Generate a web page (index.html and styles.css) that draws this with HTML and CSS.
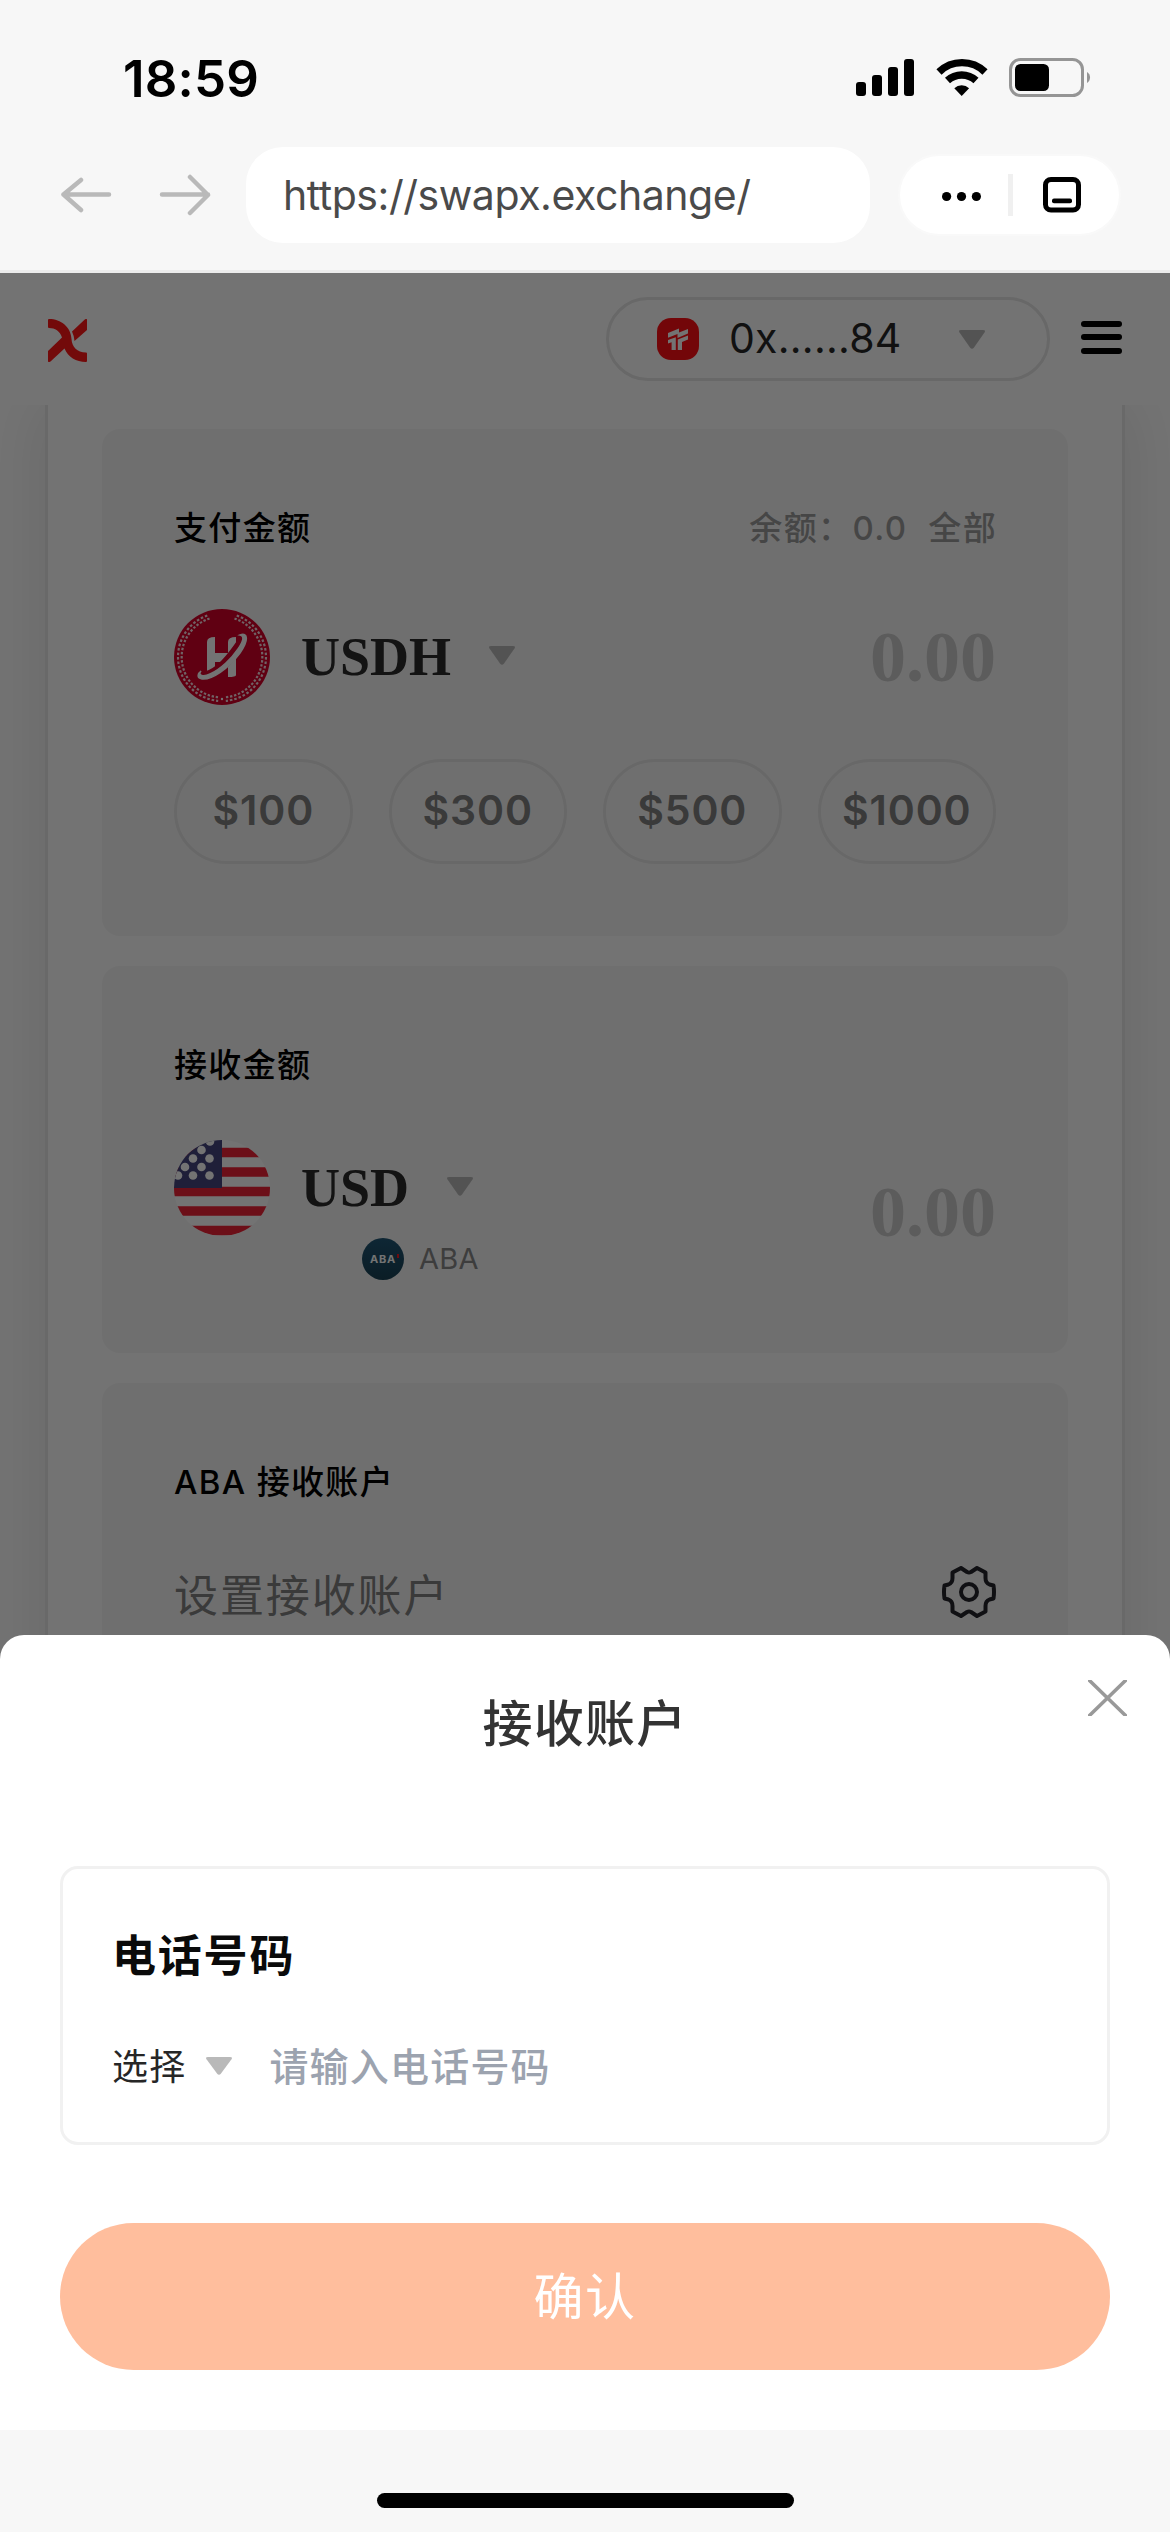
FILE: index.html
```html
<!DOCTYPE html>
<html lang="zh-CN">
<head>
<meta charset="utf-8">
<title>SwapX</title>
<link rel="stylesheet" href="styles.css">
</head>
<body>
<div class="phone">
  <div class="chrome">
    <div class="status">
      <span class="time">18:59</span>
      <svg class="status-icons" width="236" height="40" viewBox="856 58 236 40">
        <rect x="856" y="82" width="10" height="14" rx="3"/>
        <rect x="872" y="75" width="10" height="21" rx="3"/>
        <rect x="888" y="67" width="10" height="29" rx="3"/>
        <rect x="904" y="59" width="10" height="37" rx="3"/>
        <path d="M939 72 A33 33 0 0 1 985 72" fill="none" stroke="#000" stroke-width="7.4"/>
        <path d="M947.5 80.500 A21 21 0 0 1 976 80.500" fill="none" stroke="#000" stroke-width="7.400"/>
        <path d="M961.700 96 L954.300 88.200 A10.500 10.500 0 0 1 969.100 88.200 Z"/>
        <rect x="1010.500" y="59.500" width="72" height="36" rx="10" fill="none" stroke="#959595" stroke-width="3"/>
        <rect x="1015" y="64" width="34" height="27" rx="5.500"/>
        <path d="M1087 72 A6.500 6.500 0 0 1 1087 83 Z" fill="#959595"/>
      </svg>
    </div>
    <div class="toolbar">
      <svg class="arrows" width="150" height="42" viewBox="61 174 150 42">
        <path d="M109 194.500H63.500M81 180L63.500 194.500L81 210" />
        <path d="M162 194.500H208M190 177L208 195L190 213"/>
      </svg>
      <div class="url">https://swapx.exchange/</div>
      <div class="capsule">
        <svg width="219" height="78" viewBox="900 156 219 78">
          <circle cx="946.600" cy="196.500" r="4.600"/><circle cx="961.500" cy="196.500" r="4.600"/><circle cx="976.400" cy="196.500" r="4.600"/>
          <rect x="1008" y="174" width="5" height="42" fill="#f0f0f0"/>
          <rect x="1045.500" y="179.500" width="33" height="30.500" rx="5.500" fill="none" stroke="#000" stroke-width="5"/>
          <rect x="1052" y="198.500" width="20" height="4.800" rx="2"/>
        </svg>
      </div>
    </div>
  </div>

  <div class="webview">
    <div class="site-header">
      <svg class="logo" width="39" height="43" viewBox="0 0 39 43">
        <path d="M1 0 C13 0 23 8 23.500 20 C24 28 29 33.500 38 33.500 Q39 33.500 39 34.500 V42 Q39 43 38 43 C28 43 20 38 16.500 29.500 L2.500 42.500 Q0 44 0 42 V32 L14 18.500 C12 12 7 9 1 9 Q0 9 0 8 V1 Q0 0 1 0Z"/>
        <path d="M24 12.500 L36.500 .7 Q39 -1 39 1 V11 L26.500 22 Q26 16.500 24 12.500Z"/>
      </svg>
      <div class="header-right">
        <div class="wallet">
          <svg width="42" height="42" viewBox="0 0 42 42">
            <rect width="42" height="42" rx="14" fill="#ff0f14"/>
            <path d="M11 15L22 10.500V14.500L31 11V15.500L20.500 20V16L11 19.800ZM11 22L18.800 19.300V32H14.600V24.300L11 25.500ZM20.800 21.500L31 17.500V21.500L25 24V32H20.800Z" fill="#fff"/>
          </svg>
          <span class="address">0x......84</span>
          <svg class="caret" width="26" height="19" viewBox="0 0 26 19"><path d="M2 0H24Q27 0 25.500 2.500L15 17.500Q13 20 11 17.500L.5 2.500Q-1 0 2 0Z"/></svg>
        </div>
        <div class="menu"><i></i><i></i><i></i></div>
      </div>
    </div>

    <div class="page">
      <div class="panel">
        <div class="card pay">
          <div class="card-head"><span class="label">支付金额</span><span class="balance"><span>余额：</span><span>0.0</span><span class="all">全部</span></span></div>
          <div class="asset-row">
            <svg class="coin" width="96" height="96" viewBox="0 0 96 96">
              <circle cx="48" cy="48" r="48" fill="#d60029"/>
              <g fill="none" stroke="#fff" stroke-width="2.200" stroke-dasharray="2.600 1.900" opacity=".85">
                <path d="M33.300 6.500A44 44 0 0 0 44.200 91.800M62.700 6.500A44 44 0 0 1 51.800 91.800"/>
                <path d="M35.500 9.500A40.500 40.500 0 0 0 44.500 88.300M60.500 9.500A40.500 40.500 0 0 1 51.500 88.300" stroke-dasharray="2.400 1.740"/>
              </g>
              <circle cx="48" cy="90" r="1.200" fill="#fff"/>
              <path d="M33 66V33Q33 28 41 28V44H54V33Q54 28 62 28V66Q62 68 54 68V53H41V63Q38 66 33 66Z" fill="#fff"/>
              <path d="M25 68Q40 68 55 50Q68 34 70 28" fill="none" stroke="#d60029" stroke-width="9"/>
              <path d="M66 26C74 23 75 31 66 44C54 60 38 71 28 70C22 69 24 64 27 62C23 67 30 68 36 65C47 60 58 49 64 40C69 33 71 27 66 26Z" fill="#fff" stroke="#fff" stroke-width="1.500"/>
            </svg>
            <span class="symbol">USDH</span>
            <svg class="caret" width="26" height="19" viewBox="0 0 26 19"><path d="M2 0H24Q27 0 25.500 2.500L15 17.500Q13 20 11 17.500L.5 2.500Q-1 0 2 0Z"/></svg>
            <span class="amount">0.00</span>
          </div>
          <div class="chips"><span>$100</span><span>$300</span><span>$500</span><span>$1000</span></div>
        </div>

        <div class="card receive">
          <div class="card-head"><span class="label">接收金额</span></div>
          <div class="receive-body">
            <div>
              <div class="asset-row">
                <svg class="coin" width="96" height="96" viewBox="0 0 96 96">
                  <defs><clipPath id="round"><circle cx="48" cy="48" r="48"/></clipPath></defs>
                  <g clip-path="url(#round)">
                    <rect width="96" height="96" fill="#fff"/>
                    <path d="M0 12.500H96M0 32H96M0 51.500H96M0 71H96M0 90.500H96" stroke="#ef2235" stroke-width="9.700"/>
                    <rect width="48" height="48" fill="#46467f"/>
                    <g fill="#fff"><circle cx="36" cy="1.500" r="4.300"/><circle cx="27.500" cy="10" r="4.300"/><circle cx="19" cy="18.500" r="4.300"/><circle cx="35.500" cy="18.500" r="4.300"/><circle cx="11" cy="27" r="4.300"/><circle cx="27.500" cy="27" r="4.300"/><circle cx="4" cy="35.500" r="4.300"/><circle cx="19" cy="35.500" r="4.300"/><circle cx="35.500" cy="35.500" r="4.300"/></g>
                  </g>
                </svg>
                <span class="symbol">USD</span>
                <svg class="caret" width="26" height="19" viewBox="0 0 26 19"><path d="M2 0H24Q27 0 25.500 2.500L15 17.500Q13 20 11 17.500L.5 2.500Q-1 0 2 0Z"/></svg>
              </div>
              <div class="bank"><span class="bank-logo">ABA<i></i></span><span class="bank-name">ABA</span></div>
            </div>
            <span class="amount">0.00</span>
          </div>
        </div>

        <div class="card account">
          <div class="card-head"><span class="label">ABA 接收账户</span></div>
          <div class="account-row">
            <span>设置接收账户</span>
            <svg width="54" height="52" viewBox="0 0 54 52">
              <path d="M19 2 L25 6 Q27 7 29 6 L35 2 L43.500 6.500 V12 Q43.500 17 47.500 18.500 L51.500 19.500 Q52.500 26 51.500 32.500 L47.500 33.500 Q43.500 35 43.500 40 V45.500 L35 50 L29 46 Q27 45 25 46 L19 50 L10.500 45.500 V40 Q10.500 35 6.500 33.500 L2.500 32.500 Q1.500 26 2.500 19.500 L6.500 18.500 Q10.500 17 10.500 12 V6.500 Z"/>
              <circle cx="27" cy="26" r="8"/>
            </svg>
          </div>
        </div>
      </div>
    </div>

    <div class="mask">
      <div class="sheet">
        <svg class="close" width="39" height="36" viewBox="0 0 39 36"><path d="M0 -1L39 37M39 -1L0 37"/></svg>
        <div class="sheet-title">接收账户</div>
        <div class="field">
          <div class="field-label">电话号码</div>
          <div class="field-row">
            <span class="select">选择</span>
            <svg class="caret" width="26" height="18" viewBox="0 0 26 19" preserveAspectRatio="none"><path d="M2 0H24Q27 0 25.500 2.500L15 17.500Q13 20 11 17.500L.5 2.500Q-1 0 2 0Z"/></svg>
            <span class="placeholder">请输入电话号码</span>
          </div>
        </div>
        <div class="confirm">确认</div>
      </div>
    </div>
  </div>

  <div class="home"><i></i></div>
</div>
</body>
</html>
```
FILE: styles.css
```css
* { box-sizing: border-box; }
body {
  margin: 0;
  font-family: Inter, "Noto Sans CJK SC", sans-serif;
  background: #fff;
}
svg { display: block; flex: none; }
.phone {
  width: 1170px;
  height: 2532px;
  display: flex;
  flex-direction: column;
  overflow: hidden;
}

.chrome {
  height: 273px;
  background: #f7f7f7;
  border-bottom: 3px solid #ececec;
}
.status {
  height: 147px;
  padding: 58px 78px 0 123px;
  display: flex;
  justify-content: space-between;
}
.time {
  font-size: 51px;
  line-height: 41px;
  font-weight: 600;
  letter-spacing: .2px;
}
.toolbar { display: flex; height: 96px; padding: 0 51px 0 61px; align-items: center; }
.arrows { fill: none; stroke: #b9b9b9; stroke-width: 4.5; stroke-linecap: round; stroke-linejoin: round; }
.url {
  width: 624px;
  height: 96px;
  margin: 0 30px 0 35px;
  padding-left: 37px;
  border-radius: 37px;
  background: #fff;
  color: #4a4a4a;
  font-size: 41px;
  line-height: 96px;
  letter-spacing: -.45px;
  white-space: nowrap;
}
.capsule { width: 219px; height: 78px; border-radius: 39px; background: #fff; box-shadow: 0 0 0 2px #f9f9f9; }

.webview { position: relative; height: 2157px; overflow: hidden; }
.site-header {
  height: 132px;
  padding: 24px 48px 24px;
  display: flex;
  align-items: center;
  justify-content: space-between;
  background: #fff;
}
.logo { fill: #ff1717; margin-top: 2px; }
.header-right { display: flex; align-items: center; gap: 31px; }
.wallet {
  width: 444px;
  height: 84px;
  padding: 0 62px 0 48px;
  display: flex;
  align-items: center;
  border: 3px solid #e6e6e6;
  border-radius: 42px;
}
.address { margin: -2px 0 0 30px; font-size: 41px; letter-spacing: .25px; color: #262626; white-space: nowrap; }
.wallet .caret { margin-left: auto; }
.caret { fill: #b9b9b9; }
.menu { width: 41px; display: flex; flex-direction: column; gap: 7.5px; margin-top: -4px; }
.menu i { height: 6px; border-radius: 3px; background: #000; }

.page { height: 2025px; padding: 0 45px; overflow: hidden; }
.panel {
  height: 2100px;
  padding: 24px 54px;
  display: flex;
  flex-direction: column;
  gap: 30px;
  border: solid #e8e8e8;
  border-width: 0 3px;
  box-shadow: 0 0 60px rgba(0, 0, 0, .1);
}
.card { padding: 0 72px; border-radius: 18px; background: #f7f7f7; }
.card-head { display: flex; justify-content: space-between; }
.label, .balance { font-size: 33px; font-weight: 500; letter-spacing: 1.35px; line-height: 48px; }
.label { color: #000; }
.balance { display: flex; color: #9c9c9c; margin-right: -1px; }
.balance .all { margin-left: 21px; }
.asset-row { display: flex; align-items: center; height: 96px; }
.symbol {
  margin-left: 31px;
  font: bold 54px "Liberation Serif", serif;
  color: #2a2a2a;
}
.asset-row .caret { margin-left: 38px; margin-top: -4px; }
.amount { margin-left: auto; font: bold 72px/96px "Liberation Serif", serif; color: #ccc; }

.pay { height: 507px; padding-top: 75px; }
.pay .asset-row { margin-top: 57px; }
.chips { display: grid; grid-template-columns: repeat(4, 1fr); gap: 36px; margin-top: 54px; }
.chips span {
  height: 105px;
  border: 3px solid #e6e6e6;
  border-radius: 53px;
  color: #808080;
  font-size: 41px;
  font-weight: 600;
  line-height: 97px;
  letter-spacing: .9px;
  text-align: center;
  white-space: nowrap;
}

.receive { height: 387px; padding-top: 75px; }
.receive-body { display: flex; margin-top: 51px; }
.receive-body .amount { margin-top: 24px; }
.bank { display: flex; align-items: center; gap: 15px; margin: 2px 0 0 188px; font-size: 29px; color: #888; }
.bank-name { margin-top: -2px; letter-spacing: .3px; }
.bank-logo {
  position: relative;
  width: 42px;
  height: 42px;
  border-radius: 50%;
  background: linear-gradient(#1f5675, #194154);
  color: #fff;
  font-size: 11px;
  font-weight: 700;
  letter-spacing: .7px;
  line-height: 42px;
  text-align: center;
}
.bank-logo i { position: absolute; right: 5px; top: 16px; width: 2px; height: 4px; background: #f21b23; }

.account { flex: 1; padding-top: 75px; }
.account-row { display: flex; justify-content: space-between; align-items: center; margin-top: 54px; font-size: 44px; line-height: 66px; letter-spacing: 1.9px; color: #808080; }
.account-row span { margin: 3px 0 -3px; }
.account-row svg { margin-top: -2px; fill: none; stroke: #24242c; stroke-width: 4; stroke-linejoin: round; }

.mask {
  position: absolute;
  inset: 0;
  padding-top: 1362px;
  background: rgba(0, 0, 0, .55);
}
.sheet {
  position: relative;
  height: 795px;
  padding: 53px 60px 60px;
  border-radius: 24px 24px 0 0;
  background: #fff;
}
.close { position: absolute; left: 1088px; top: 45px; fill: none; stroke: #999; stroke-width: 3.5; }
.sheet-title { font-size: 50px; line-height: 72px; font-weight: 500; letter-spacing: 1.2px; text-align: center; color: #333; }
.field { height: 279px; margin-top: 106px; padding: 54px 49px 0; border: 3px solid #f1f1f1; border-radius: 18px; }
.field-label { font-size: 44px; line-height: 66px; font-weight: 700; letter-spacing: 1.8px; color: #0a0a0a; }
.field-row { display: flex; align-items: center; margin-top: 48px; line-height: 60px; }
.select { font-size: 36px; letter-spacing: 1.2px; color: #262626; }
.field-row .caret { margin: -3px 0 0 20px; }
.placeholder { margin-left: 37px; font-size: 39px; font-weight: 500; letter-spacing: 1.2px; color: #9ca3af; }
.confirm { height: 147px; margin-top: 78px; border-radius: 74px; background: #ffbe9d; color: #fff; font-size: 50px; line-height: 149px; letter-spacing: 1.6px; text-align: center; }

.home { height: 102px; padding-top: 63px; background: #f7f7f7; }
.home i { display: block; width: 417px; height: 15px; margin: 0 auto; border-radius: 8px; background: #000; }
```
